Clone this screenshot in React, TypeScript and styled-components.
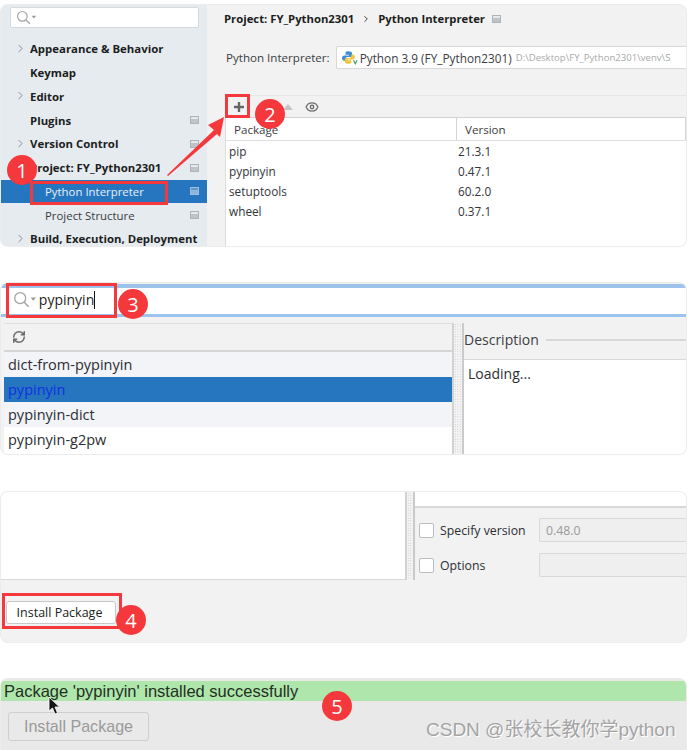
import React from "react";
import styled, { createGlobalStyle } from "styled-components";
import { ChevronRight, Eye, RefreshCw } from "lucide-react";

const GlobalStyle = createGlobalStyle`
  html, body {
    margin: 0;
    padding: 0;
    background: #fff;
    font-family: "Open Sans", "Noto Sans CJK SC", sans-serif;
    color: #26282b;
  }
  * {
    box-sizing: border-box;
  }
`;

const Page = styled.div`
  position: relative;
  width: 690px;
  height: 750px;
  overflow: hidden;
  padding: 5px 4px 0 1px;
`;

const Card = styled.section<{ $h: number; $mt?: number; $bg?: string }>`
  height: ${(p) => p.$h}px;
  margin-top: ${(p) => p.$mt || 0}px;
  background: ${(p) => p.$bg || "#f2f2f2"};
  border-radius: 7px;
  overflow: hidden;
  box-shadow: 0 0 0 1px #ececec;
`;

/* settings card */
const SettingsCard = styled(Card)`
  display: flex;
`;

const Sidebar = styled.aside`
  width: 206px;
  flex-shrink: 0;
  background: #e6ebf0;
  padding-top: 2px;
`;

const SideSearch = styled.div`
  display: flex;
  align-items: center;
  height: 21px;
  margin: 0 8px 9px 9px;
  padding-left: 5px;
  background: #fff;
  border: 1px solid #d6d9dc;
  border-radius: 2px;
`;

const NavRow = styled.div<{ $active?: boolean; $sub?: boolean }>`
  display: flex;
  align-items: center;
  height: 23.75px;
  padding-left: ${(p) => (p.$sub ? 44 : 29)}px;
  padding-right: 8px;
  position: relative;
  font-size: 11.4px;
  font-weight: ${(p) => (p.$sub ? 400 : 700)};
  color: ${(p) => (p.$active ? "#e8f0f8" : p.$sub ? "#3a3c40" : "#1c1e21")};
  background: ${(p) => (p.$active ? "#2675bf" : "transparent")};
  &:last-child {
    height: 14px;
    margin-top: 5px;
    line-height: 14px;
  }
`;

const NavChevron = styled.span`
  position: absolute;
  left: 13px;
  top: 50%;
  margin-top: -7px;
  display: flex;
  color: #77797c;
`;

const NavLabel = styled.span`
  flex: 1;
  white-space: nowrap;
`;

const GearMark = styled.span<{ $active?: boolean }>`
  display: inline-block;
  width: 9px;
  height: 8px;
  background: ${(p) => (p.$active ? "#8fb4d8" : "#bfc4c9")};
  border: 1px solid ${(p) => (p.$active ? "#9cbfe0" : "#aeb3b8")};
  box-shadow: inset 0 2px 0 ${(p) => (p.$active ? "#5e97cd" : "#e6e9ec")};
`;

const Main = styled.div`
  flex: 1;
  min-width: 0;
  padding-top: 4px;
`;

const Crumbs = styled.div`
  display: flex;
  align-items: center;
  height: 19px;
  padding-left: 17px;
  font-size: 11.3px;
  font-weight: 700;
  color: #1c1e21;
  gap: 7px;
`;

const InterpreterRow = styled.div`
  display: flex;
  align-items: center;
  margin-top: 18px;
  padding-left: 19px;
  font-size: 11.6px;
  color: #3c3e42;
  white-space: nowrap;
`;

const InterpreterSelect = styled.div`
  display: flex;
  align-items: center;
  flex: 1;
  height: 23px;
  margin-left: 6px;
  padding-left: 5px;
  gap: 2px;
  overflow: hidden;
  background: #fff;
  border: 1px solid #d8d8d8;
  border-right: 0;
  border-radius: 2px 0 0 2px;
  font-size: 11.8px;
  svg {
    flex-shrink: 0;
  }
`;

const DimPath = styled.span`
  margin-left: 2px;
  font-size: 9.6px;
  color: #a9a9a9;
`;

const TablePane = styled.div`
  margin: 26px 0 0 18px;
  height: 153px;
  background: #fff;
  border-left: 1px solid #dcdcdc;
`;

const TableTools = styled.div`
  display: flex;
  align-items: center;
  height: 23px;
  background: #f2f2f2;
  border-top: 1px solid #e6e6e6;
  border-bottom: 1px solid #d2d2d2;
  margin-left: -1px;
  padding-left: 8px;
  color: #6d6d6d;
`;

const TriangleUp = styled.span`
  margin-left: 38px;
  width: 0;
  height: 0;
  border-left: 5px solid transparent;
  border-right: 5px solid transparent;
  border-bottom: 6px solid #c4c4c4;
`;

const EyeSlot = styled.span`
  display: flex;
  margin-left: 12px;
`;

const TableHead = styled.div`
  display: grid;
  grid-template-columns: 230px 230px;
  height: 23px;
  border-bottom: 1px solid #dedede;
  font-size: 11.6px;
  color: #3c3e42;
`;

const HeadCell = styled.div<{ $first?: boolean }>`
  display: flex;
  align-items: center;
  padding-left: 8px;
  height: 22px;
  border-left: ${(p) => (p.$first ? "0" : "1px solid #d4d4d4")};
  border-right: ${(p) => (p.$first ? "0" : "1px solid #d4d4d4")};
`;

const PackageRow = styled.div`
  display: grid;
  grid-template-columns: 229px 1fr;
  height: 20px;
  align-items: center;
  padding-left: 3px;
  font-size: 11.8px;
  color: #33353a;
`;

/* search card */
const SearchBar = styled.div`
  display: flex;
  align-items: center;
  height: 33px;
  margin-top: 1px;
  padding: 0 0 3px 12px;
  gap: 1px;
  background: #fff;
  border-top: 4px solid #9cc3ec;
  border-bottom: 3px solid #9cc3ec;
  font-size: 14px;
  color: #1c1e21;
`;

const Caret = styled.span`
  display: inline-block;
  width: 1px;
  height: 18px;
  background: #111;
  vertical-align: -4px;
`;

const SplitRow = styled.div<{ $h: number; $mt?: number; $leftW: number; $splitW: number }>`
  display: grid;
  grid-template-columns: ${(p) => p.$leftW}px ${(p) => p.$splitW}px 1fr;
  height: ${(p) => p.$h}px;
  margin-top: ${(p) => p.$mt || 0}px;
  padding-left: 3px;
`;

const ListPane = styled.div`
  display: flex;
  flex-direction: column;
  background: #fff;
`;

const ListTools = styled.div`
  display: flex;
  align-items: center;
  height: 29px;
  flex-shrink: 0;
  padding-left: 8px;
  background: #f2f2f2;
  border-top: 1px solid #dedede;
  border-bottom: 2px solid #d6d6d6;
  color: #6b6b6b;
`;

const ListRow = styled.div<{ $active?: boolean; $alt?: boolean }>`
  display: flex;
  align-items: center;
  height: 24.9px;
  padding-left: 4px;
  font-size: 14.5px;
  color: ${(p) => (p.$active ? "#1330e0" : "#2c2e33")};
  background: ${(p) => (p.$active ? "#2675bf" : p.$alt ? "#f2f4f8" : "#fff")};
`;

const Splitter = styled.div`
  border-left: 2px solid #d2d2d2;
  border-right: 2px solid #c8cacc;
  background-color: #f4f4f4;
  background-image: radial-gradient(#bdbdbd 0.7px, transparent 0.8px);
  background-size: 2.5px 2.5px;
`;

const DescPane = styled.div`
  display: flex;
  flex-direction: column;
`;

const DescHead = styled.div`
  display: flex;
  align-items: center;
  gap: 7px;
  height: 37px;
  flex-shrink: 0;
  padding-bottom: 3px;
  font-size: 14px;
  color: #3c3e42;
  border-bottom: 1px solid #d8d8d8;
`;

const DescRule = styled.span`
  flex: 1;
  height: 2px;
  background: #d8d8d8;
`;

const DescBody = styled.div`
  flex: 1;
  background: #fff;
  padding: 4px 4px;
  font-size: 14px;
  color: #2c2e33;
`;

/* options card */
const WhitePane = styled.div`
  background: #fff;
  margin-left: -3px;
  border-bottom: 1px solid #d8d8d8;
`;

const OptionsPane = styled.div`
  display: flex;
  flex-direction: column;
`;

const OptionsTop = styled.div`
  height: 16px;
  background: #fff;
  border-bottom: 2px solid #d8d8d8;
  flex-shrink: 0;
`;

const OptionRow = styled.div`
  display: flex;
  align-items: center;
  height: 24px;
  margin-top: 10px;
  padding-left: 4px;
  font-size: 12.3px;
  color: #2c2e33;
  & + & {
    margin-top: 11px;
  }
`;

const CheckBox = styled.span`
  width: 15px;
  height: 15px;
  flex-shrink: 0;
  background: #fff;
  border: 1px solid #bcbcbc;
  border-radius: 2px;
`;

const OptionLabel = styled.span`
  width: 99px;
  margin-left: 6px;
  white-space: nowrap;
`;

const OptionInput = styled.div`
  flex: 1;
  display: flex;
  align-items: center;
  height: 24px;
  padding-left: 6px;
  font-size: 12.3px;
  color: #9a9a9a;
  background: #efefef;
  border: 1px solid #d8d8d8;
  border-right: 0;
  border-radius: 2px 0 0 2px;
`;

const Footer = styled.div`
  padding: 21px 0 0 5px;
`;

const InstallButton = styled.button`
  display: block;
  width: 110px;
  height: 23px;
  padding: 0 3px 0 0;
  font-family: inherit;
  font-size: 12.5px;
  color: #1c1e21;
  background: #fff;
  border: 1px solid #c8c8c8;
  border-radius: 3px;
`;

/* success card */
const SuccessBar = styled.div`
  display: flex;
  align-items: center;
  height: 20px;
  margin-top: 2px;
  padding-left: 3px;
  background: #aee6ab;
  font-family: "Liberation Sans", sans-serif;
  font-size: 16.5px;
  color: #24301f;
  white-space: nowrap;
`;

const SuccessFooter = styled.div`
  padding: 11px 0 0 7px;
`;

const DisabledButton = styled.button`
  display: block;
  width: 141px;
  height: 29px;
  padding: 0;
  font-family: "Liberation Sans", sans-serif;
  font-size: 16.1px;
  color: #9a9a9a;
  background: #e9e9e9;
  border: 1px solid #cfcfcf;
  border-radius: 3px;
`;

/* annotations drawn over the screenshots */
const Badge = styled.span<{ $x: number; $y: number }>`
  position: absolute;
  left: ${(p) => p.$x - 15}px;
  top: ${(p) => p.$y - 15}px;
  width: 30px;
  height: 30px;
  display: flex;
  align-items: center;
  justify-content: center;
  border-radius: 50%;
  background: #f5383b;
  color: #fff;
  font-size: 20px;
`;

const RedBox = styled.span<{ $x: number; $y: number; $w: number; $h: number }>`
  position: absolute;
  left: ${(p) => p.$x}px;
  top: ${(p) => p.$y}px;
  width: ${(p) => p.$w}px;
  height: ${(p) => p.$h}px;
  border: 3px solid #f5383b;
`;

const ArrowLayer = styled.svg`
  position: absolute;
  left: 160px;
  top: 110px;
`;

const CursorLayer = styled.svg`
  position: absolute;
  left: 47px;
  top: 696px;
`;

const Watermark = styled.span`
  position: absolute;
  left: 426px;
  top: 719px;
  font-size: 19px;
  line-height: 22px;
  font-family: "Liberation Sans", "Noto Sans CJK SC", sans-serif;
  color: #a4a4a4;
  text-shadow: 1px 1px 0 #fff;
  white-space: nowrap;
`;

const SearchIcon = ({ size = 15 }: { size?: number }) => (
  <svg width={(size * 19) / 13} height={size} viewBox="0 0 19 13" fill="none">
    <circle cx="5.5" cy="5.5" r="4.2" stroke="#a3a3a3" strokeWidth="1" />
    <path d="M8.6 8.6L12 12" stroke="#a3a3a3" strokeWidth="1.2" />
    <path d="M13.5 5h4l-2 2.4z" fill="#9a9a9a" />
  </svg>
);

const PythonIcon = () => (
  <svg width="16" height="15" viewBox="0 0 18 16">
    <path d="M7 1C4 1 4 2.200 4 3.500V5h4v.7H2.600C1 5.700 0 7 0 8.600c0 1.700 1 3 2.400 3H4V9.800c0-1.200 1-2.300 2.400-2.300h3c1 0 2-.9 2-2V3.300C11.400 1.800 9.800 1 7 1z" fill="#3f8fd0" />
    <path d="M7.500 15c3 0 3-1.200 3-2.500V11h-4v-.7h5.400c1.600 0 2.600-1.300 2.600-2.900s-1-2.900-2.400-2.900h-1.600v1.700c0 1.200-1 2.300-2.400 2.300h-3c-1 0-2 .9-2 2v2.200C3.100 14.200 4.700 15 7.500 15z" fill="#f4c63d" />
    <path d="M13 11l2 4 2-4" fill="none" stroke="#3d9a5a" strokeWidth="1.200" />
  </svg>
);

const navItems = [
  { label: "Appearance & Behavior", chevron: true },
  { label: "Keymap" },
  { label: "Editor", chevron: true },
  { label: "Plugins", gear: true },
  { label: "Version Control", chevron: true, gear: true },
  { label: "Project: FY_Python2301", gear: true },
  { label: "Python Interpreter", sub: true, active: true, gear: true },
  { label: "Project Structure", sub: true, gear: true },
  { label: "Build, Execution, Deployment", chevron: true },
];

const packages = [
  ["pip", "21.3.1"],
  ["pypinyin", "0.47.1"],
  ["setuptools", "60.2.0"],
  ["wheel", "0.37.1"],
];

const results = ["dict-from-pypinyin", "pypinyin", "pypinyin-dict", "pypinyin-g2pw"];

const App: React.FC = () => {
  return (
    <Page>
      <GlobalStyle />

      <SettingsCard $h={241}>
        <Sidebar>
          <SideSearch>
            <SearchIcon />
          </SideSearch>
          {navItems.map((item) => (
            <NavRow key={item.label} $active={item.active} $sub={item.sub}>
              {item.chevron && (
                <NavChevron>
                  <ChevronRight size={13} strokeWidth={1.5} />
                </NavChevron>
              )}
              <NavLabel>{item.label}</NavLabel>
              {item.gear && <GearMark $active={item.active} />}
            </NavRow>
          ))}
        </Sidebar>
        <Main>
          <Crumbs>
            <span>Project: FY_Python2301</span>
            <ChevronRight size={10} strokeWidth={2} />
            <span>Python Interpreter</span>
            <GearMark />
          </Crumbs>
          <InterpreterRow>
            Python Interpreter:
            <InterpreterSelect>
              <PythonIcon />
              Python 3.9 (FY_Python2301)
              <DimPath>D:\Desktop\FY_Python2301\venv\S</DimPath>
            </InterpreterSelect>
          </InterpreterRow>
          <TablePane>
            <TableTools>
              <svg width="12" height="12" viewBox="0 0 12 12">
                <path d="M6 1v10M1 6h10" stroke="#666" strokeWidth="2.400" />
              </svg>
              <TriangleUp />
              <EyeSlot>
                <Eye size={14} strokeWidth={2.2} />
              </EyeSlot>
            </TableTools>
            <TableHead>
              <HeadCell $first>Package</HeadCell>
              <HeadCell>Version</HeadCell>
            </TableHead>
            {packages.map(([name, version]) => (
              <PackageRow key={name}>
                <span>{name}</span>
                <span>{version}</span>
              </PackageRow>
            ))}
          </TablePane>
        </Main>
      </SettingsCard>

      <Card $h={171} $mt={37}>
        <SearchBar>
          <SearchIcon size={17} />
          <span>
            pypinyin
            <Caret />
          </span>
        </SearchBar>
        <SplitRow $h={131} $mt={6} $leftW={448} $splitW={12}>
          <ListPane>
            <ListTools>
              <RefreshCw size={14} strokeWidth={2.6} />
            </ListTools>
            {results.map((name, i) => (
              <ListRow key={name} $active={i === 1} $alt={i % 2 === 0 && i < 3}>
                {name}
              </ListRow>
            ))}
          </ListPane>
          <Splitter />
          <DescPane>
            <DescHead>
              Description
              <DescRule />
            </DescHead>
            <DescBody>Loading...</DescBody>
          </DescPane>
        </SplitRow>
      </Card>

      <Card $h={150} $mt={38}>
        <SplitRow $h={88} $leftW={401} $splitW={10}>
          <WhitePane />
          <Splitter />
          <OptionsPane>
            <OptionsTop />
            <OptionRow>
              <CheckBox />
              <OptionLabel>Specify version</OptionLabel>
              <OptionInput>0.48.0</OptionInput>
            </OptionRow>
            <OptionRow>
              <CheckBox />
              <OptionLabel>Options</OptionLabel>
              <OptionInput />
            </OptionRow>
          </OptionsPane>
        </SplitRow>
        <Footer>
          <InstallButton>Install Package</InstallButton>
        </Footer>
      </Card>

      <Card $h={80} $mt={37} $bg="#e9e9e9">
        <SuccessBar>Package 'pypinyin' installed successfully</SuccessBar>
        <SuccessFooter>
          <DisabledButton>Install Package</DisabledButton>
        </SuccessFooter>
      </Card>

      <ArrowLayer width="70" height="70" viewBox="0 0 70 70">
        <path d="M64 7L48 15L54 20L7 65L8 66L57 24L60 27z" fill="#f5383b" />
      </ArrowLayer>

      <RedBox $x={30} $y={181} $w={138} $h={24} />
      <RedBox $x={225} $y={94} $w={25} $h={24} />
      <RedBox $x={6} $y={283} $w={111} $h={35} />
      <RedBox $x={2} $y={593} $w={120} $h={36} />

      <Badge $x={22} $y={170}>1</Badge>
      <Badge $x={270} $y={114}>2</Badge>
      <Badge $x={133} $y={304}>3</Badge>
      <Badge $x={131} $y={620}>4</Badge>
      <Badge $x={337} $y={706}>5</Badge>

      <CursorLayer width="14" height="20" viewBox="0 0 14 20">
        <path d="M2 1v14l3.500-3 2.500 6 2.500-1-2.500-6h4.500z" fill="#151515" stroke="#fff" strokeWidth="0.800" />
      </CursorLayer>

      <Watermark>CSDN @张校长教你学python</Watermark>
    </Page>
  );
};

export default App;
